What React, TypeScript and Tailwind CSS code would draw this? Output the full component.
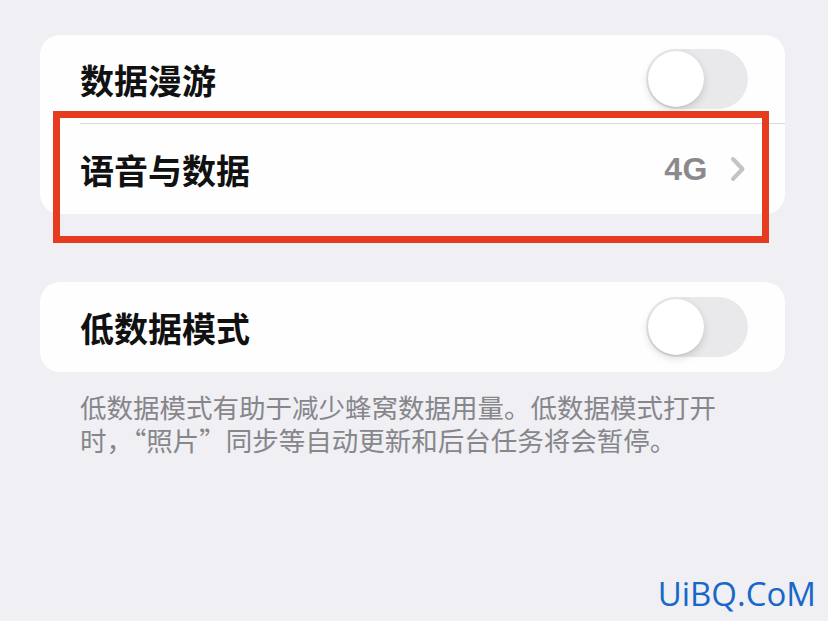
import React from "react";

const cjk = { fontFamily: '"Noto Sans CJK SC", "Noto Sans", sans-serif' };

function Toggle() {
  return (
    <div className="relative w-[102px] h-[60px] rounded-full bg-[#e9e9eb]">
      <div className="absolute left-[2px] top-[2px] w-[56px] h-[56px] rounded-full bg-white shadow-[0_3px_8px_rgba(0,0,0,0.15),0_1px_1px_rgba(0,0,0,0.08)]" />
    </div>
  );
}

export default function App() {
  return (
    <div
      className="relative w-[828px] h-[621px] overflow-hidden bg-[#efeff4] pt-[35px] pl-[40px]"
      style={cjk}
    >
      {/* first group */}
      <div className="w-[745px] rounded-[20px] bg-[#fefefe]">
        <div className="h-[88px] flex items-center justify-between pl-[40px] pr-[37px]">
          <span className="text-[34px] font-semibold text-[#111]">数据漫游</span>
          <Toggle />
        </div>
        <div className="ml-[40px] h-px bg-[#d9d9dd]" />
        <div className="h-[90px] flex items-center justify-between pl-[40px] pr-[39px]">
          <span className="text-[34px] font-semibold text-[#111]">语音与数据</span>
          <div className="flex items-center gap-[22px]">
            <span
              className="text-[32px] text-[#8a8a8e] font-semibold tracking-[0.5px]"
              style={{ fontFamily: '"Liberation Sans", Arial, sans-serif' }}
            >
              4G
            </span>
            <svg width="16" height="26" viewBox="0 0 16 26" fill="none">
              <path d="M3 3 L12.5 13 L3 23" stroke="#c4c4c7" strokeWidth="4" strokeLinecap="round" strokeLinejoin="round" />
            </svg>
          </div>
        </div>
      </div>

      {/* second group */}
      <div className="mt-[68px] w-[745px] h-[90px] rounded-[20px] bg-[#fefefe] flex items-center justify-between pl-[40px] pr-[37px]">
        <span className="text-[34px] font-semibold text-[#111]">低数据模式</span>
        <Toggle />
      </div>

      <p className="mt-[18px] pl-[40px] w-[700px] text-[26.5px] leading-[33px] text-[#86868b]">
        低数据模式有助于减少蜂窝数据用量。低数据模式打开时，“照片”同步等自动更新和后台任务将会暂停。
      </p>

      {/* red annotation frame */}
      <div className="absolute left-[53px] top-[111px] w-[716px] h-[132px] border-[7px] border-[#e63b1f]" />

      {/* watermark */}
      <div
        className="absolute right-[12px] bottom-[11px] text-[33px] leading-none text-[#1768c9]"
        style={{ fontFamily: '"Open Sans", "Liberation Sans", sans-serif' }}
      >
        UiBQ.CoM
      </div>
    </div>
  );
}
